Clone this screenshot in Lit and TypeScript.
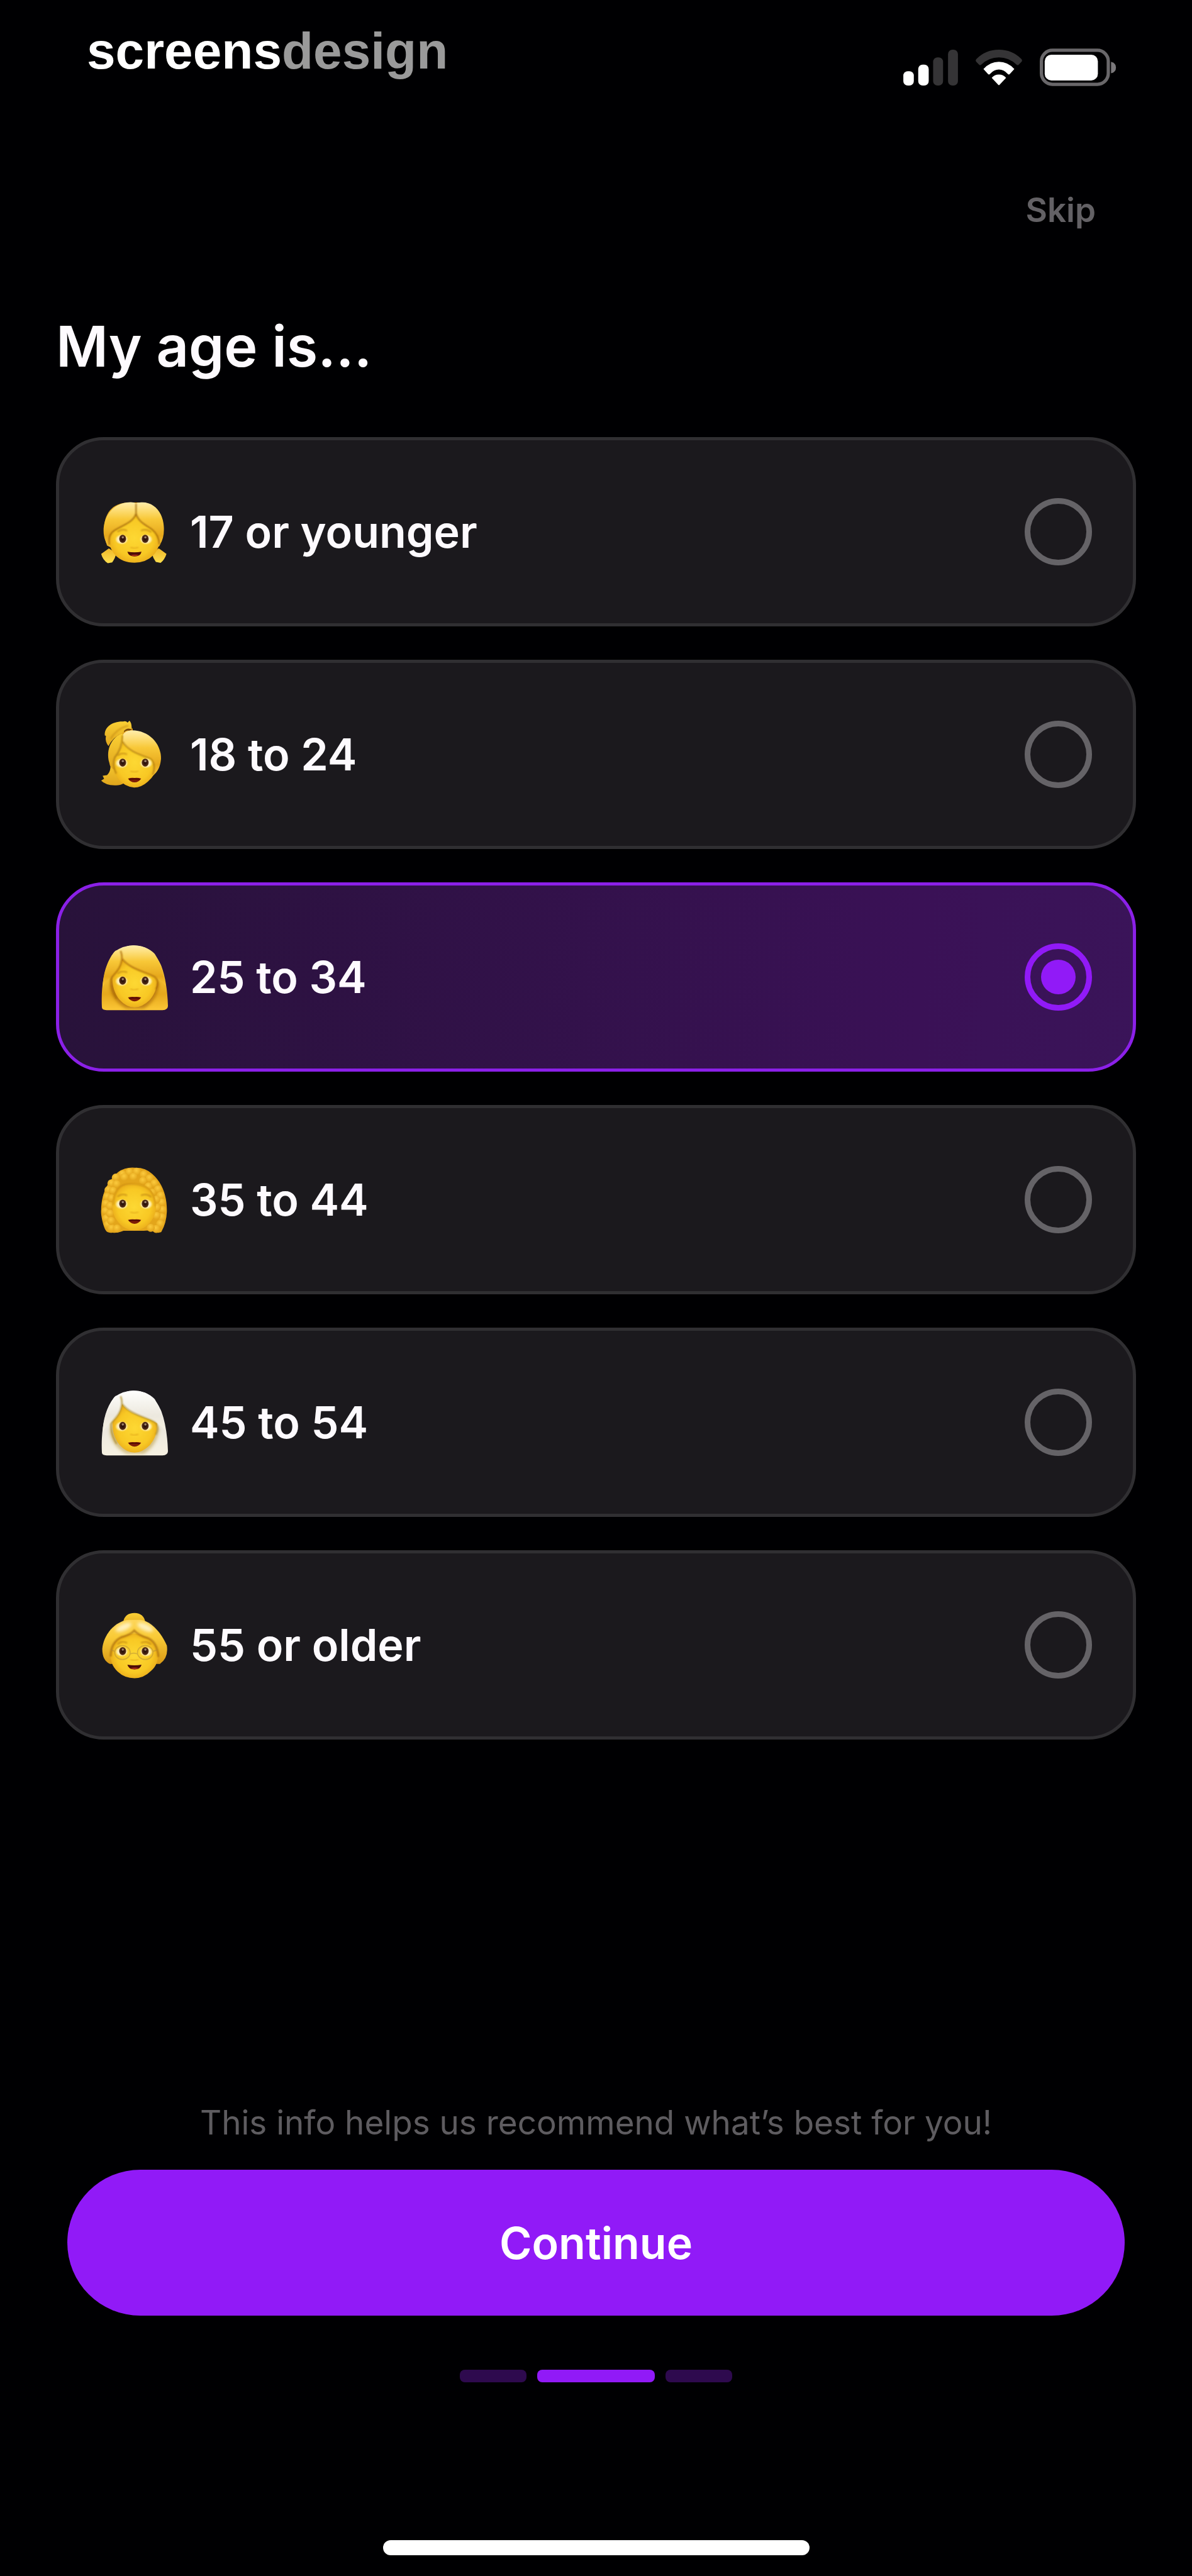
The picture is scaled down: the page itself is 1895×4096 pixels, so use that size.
import { LitElement, html, svg, css, type SVGTemplateResult } from "lit";
import { customElement, state } from "lit/decorators.js";

interface AgeOption {
  id: string;
  label: string;
  /** Vertical start of the portrait's view box. */
  top: number;
  art: SVGTemplateResult;
}

const eye = (x: number, y: number, side: number) => svg`
  <ellipse cx=${x + side * 5} cy=${y + 3} rx="38" ry="30" fill="url(#sclera)" />
  <ellipse cx=${x} cy=${y} rx="19" ry="22" fill="url(#iris)" />
  <circle cx=${x + 1} cy=${y - 8} r="6" fill="#b49a86" opacity=".85" />`;

const LEFT_BROW = 1;
const BOTH_BROWS = 2;

const features = (y: number, mouth: SVGTemplateResult, brows: number) => svg`
  ${brows >= LEFT_BROW
    ? svg`<path d="M160 ${y - 40}q20-16 46-6" fill="none" stroke="#b57a0c" stroke-width="9" stroke-linecap="round" opacity=".55" filter="url(#soft)" />`
    : svg``}
  ${brows >= BOTH_BROWS
    ? svg`<path d="M288 ${y - 46}q28-10 50 8" fill="none" stroke="#b57a0c" stroke-width="9" stroke-linecap="round" opacity=".55" filter="url(#soft)" />`
    : svg``}
  ${eye(185, y, -1)} ${eye(308, y, 1)}
  <path d="M230 ${y + 46}q18 10 38 0" fill="none" stroke="#d99a12" stroke-width="8" stroke-linecap="round" opacity=".5" filter="url(#soft)" />
  ${mouth}`;

const lips = (y: number) => svg`
  <path d="M214 ${y - 4}q20-6 36-3q16-3 36 3q-14 21-36 21t-36-21z" fill="#7d1c07" />
  <path d="M220 ${y}q30-4 60 0" fill="none" stroke="#4d0903" stroke-width="6" />`;

const smile = (y: number) => svg`
  <path d="M211 ${y}q38 7 77 0q-6 26-38 26t-39-26z" fill="#4c0b06" />
  <path d="M228 ${y + 20}q22-8 46-1q-24 11-46 1z" fill="#a32a17" />`;

const girl = svg`
  <path d="M110 340L68 370Q76 402 104 421L128 416Q146 392 150 366zM382 340L424 370Q414 402 392 419L366 414Q350 392 344 366z" fill="url(#pigtail)" />
  <path d="M100 325C60 215 90 90 220 90H280C405 90 432 220 385 328L330 350H150z" fill="#e9ae22" />
  <path d="M108 250Q180 150 256 150Q340 160 388 262Q394 332 352 378Q312 418 250 418Q184 418 144 376Q102 328 108 250z" fill="url(#face)" />
  <path d="M258 94Q238 84 208 90C100 104 62 220 90 296Q98 322 118 332Q104 280 128 254C160 226 240 206 258 152Q270 208 338 232Q380 256 382 328Q412 292 410 230C408 140 350 80 278 90Q264 90 258 94z" fill="url(#hair)" />
  <path d="M258 96V148C244 206 160 220 128 252Q106 276 112 322M258 148C270 200 318 214 346 238Q382 268 386 320" fill="none" stroke="#9b6207" stroke-width="8" opacity=".75" filter="url(#soft)" />
  ${features(288, smile(358), BOTH_BROWS)}`;

const ponytail = svg`
  <path d="M118 200Q140 130 240 104L240 160L130 240z" fill="#d99a1a" />
  <path d="M236 108C232 92 236 76 222 62L212 72Q202 60 188 66C130 64 84 96 88 142L94 144Q88 176 108 200Q132 150 190 126z" fill="url(#hairFlat)" />
  <path d="M120 160Q150 106 216 88" fill="none" stroke="#bd820c" stroke-width="8" opacity=".5" filter="url(#soft)" />
  <path d="M112 270Q130 330 100 358L76 362L84 378L68 388Q90 412 142 414Q170 416 190 404L170 300z" fill="url(#hairFlat)" />
  <path d="M130 250Q140 150 240 150Q350 190 372 300Q368 356 322 394Q286 426 248 426Q196 422 162 380Q124 326 130 250z" fill="url(#face)" />
  <path d="M186 130C126 150 92 216 112 290Q116 322 144 330Q126 290 150 256Q180 222 184 186z" fill="url(#hairFlat)" />
  <path d="M186 140Q198 114 236 114C330 114 398 190 394 272Q388 336 346 364Q366 300 340 268C290 250 214 232 186 176z" fill="url(#hair)" />
  <path d="M192 118Q210 96 238 110L220 116Q206 112 192 124z" fill="#75440a" />
  <path d="M184 142Q182 216 142 262Q126 300 150 350M186 176C216 232 292 250 338 270Q368 300 350 356" fill="none" stroke="#9b6a08" stroke-width="8" opacity=".6" filter="url(#soft)" />
  ${features(290, lips(381), LEFT_BROW)}`;

const straightHair = (hair: string, shade: string, depth: number) => svg`
  <path d="M72 404C66 290 84 176 138 104Q180 66 246 66C322 66 366 108 396 178Q428 264 432 396Q432 418 402 419H98Q72 418 72 404z" fill="url(#${hair})" />
  <path d="M116 290Q124 366 206 410H300Q372 366 384 276L350 220H130z" fill=${shade} opacity=${depth} filter="url(#blurry)" />
  <path d="M130 238Q160 190 182 140Q260 190 372 234Q380 310 332 364Q290 404 250 404Q206 404 168 362Q126 310 130 238z" fill="url(#face)" />
  <path d="M176 92C150 84 138 104 138 104C96 156 78 230 76 292Q96 256 124 236Q170 206 182 138C220 200 310 206 362 238Q390 248 418 286Q404 180 360 112Q314 66 240 66Q200 66 176 92z" fill="url(#${hair})" />
  <path d="M174 96Q184 120 180 146C170 206 136 220 122 248Q118 300 152 356M182 138C226 196 304 208 360 238Q388 262 366 306" fill="none" stroke=${shade} stroke-width="9" opacity=".75" filter="url(#soft)" />`;

const woman = svg`${straightHair("hair", "#ad6d07", 0.75)}${features(258, lips(354), LEFT_BROW)}`;

const whiteHaired = svg`
  <g transform="translate(0 -8)">${straightHair("silver", "#b08f2c", 0.5)}</g>
  ${features(250, lips(346), 0)}`;

const CURLS: Array<[number, number]> = [
  [184, 96], [222, 84], [262, 82], [300, 98], [332, 118], [358, 146], [378, 178], [392, 212],
  [398, 250], [402, 290], [398, 330], [390, 366], [368, 394], [148, 114], [124, 146], [108, 182],
  [100, 218], [94, 256], [92, 296], [96, 336], [104, 370], [124, 390], [154, 392], [338, 388],
  [194, 112], [244, 110], [296, 132], [326, 162], [346, 196], [368, 234], [372, 278], [370, 322],
  [152, 150], [132, 186], [124, 226], [116, 268], [116, 310], [122, 350],
];

const curly = svg`
  <path d="M92 400C82 386 64 320 68 290C70 190 110 130 160 84Q200 56 250 60Q310 58 346 94C404 144 428 220 426 300Q424 360 396 410Q380 420 358 410Q340 398 300 404H190Q160 418 130 414Q100 418 92 400z" fill="#e3a51b" />
  ${CURLS.map(([x, y]) => svg`<circle cx=${x} cy=${y} r="22" fill="url(#curl)" />`)}
  <path d="M130 240Q140 150 250 146Q352 152 364 244Q376 310 334 360Q294 402 250 402Q202 402 164 360Q120 310 130 240z" fill="url(#face)" />
  <path d="M134 262Q140 158 210 150Q300 142 340 190Q364 226 362 270" fill="none" stroke="#c5860c" stroke-width="8" opacity=".55" filter="url(#soft)" />
  ${features(256, lips(349), BOTH_BROWS)}`;

const grandmother = svg`
  <path d="M188 116Q196 66 250 66Q300 68 308 114L250 150z" fill="url(#hairFlat)" />
  <path d="M74 262C80 188 140 110 220 104H280C340 108 400 180 426 244Q436 310 388 344H116Q74 326 74 262z" fill="url(#hairDeep)" />
  <path d="M122 280Q132 190 248 178Q366 196 374 280Q386 342 340 382Q300 422 250 422Q196 422 158 386Q112 344 122 280z" fill="url(#face)" />
  <path d="M120 304Q120 226 178 198Q230 184 248 162Q274 190 320 202Q374 224 380 306" fill="none" stroke="#a66b08" stroke-width="11" opacity=".7" filter="url(#soft)" />
  <ellipse cx="190" cy="144" rx="46" ry="18" fill="#fff6cf" opacity=".85" transform="rotate(-24 190 144)" filter="url(#blurry)" />
  <ellipse cx="308" cy="144" rx="46" ry="18" fill="#fff6cf" opacity=".85" transform="rotate(24 308 144)" filter="url(#blurry)" />
  ${features(274, smile(348), BOTH_BROWS)}
  <g fill="none" stroke="#b08a3a" stroke-width="6" opacity=".5">
    <ellipse cx="184" cy="282" rx="42" ry="38" /><ellipse cx="308" cy="282" rx="42" ry="38" />
    <path d="M226 290q20-10 40 0M142 276l-18-8M350 276l22-8" />
  </g>`;

const OPTIONS: AgeOption[] = [
  { id: "under-18", label: "17 or younger", top: 11, art: girl },
  { id: "18-24", label: "18 to 24", top: 7, art: ponytail },
  { id: "25-34", label: "25 to 34", top: 0, art: woman },
  { id: "35-44", label: "35 to 44", top: -4, art: curly },
  { id: "45-54", label: "45 to 54", top: -8, art: whiteHaired },
  { id: "55-plus", label: "55 or older", top: 2, art: grandmother },
];

@customElement("app-root")
export class AppRoot extends LitElement {
  @state() private selected = "25-34";

  static styles = css`
    :host {
      display: block;
      background: #000002;
      color: #fdfafe;
      font-family: Inter, "Liberation Sans", sans-serif;
    }
    .screen {
      box-sizing: border-box;
      min-height: 100vh;
      display: flex;
      flex-direction: column;
      padding: 35px 89px 33px;
    }
    .status {
      display: flex;
      justify-content: space-between;
      align-items: flex-start;
      padding: 0 31px 0 49px;
    }
    .brand {
      font-family: "Liberation Sans", Arial, sans-serif;
      font-size: 82px;
      line-height: 92px;
      font-weight: 700;
      color: #fff;
    }
    .brand-dim { color: #9a9a9a; }
    .indicators {
      display: flex;
      align-items: center;
      gap: 28px;
      padding-top: 42px;
    }
    .indicators svg { display: block; }
    .topbar {
      display: flex;
      justify-content: flex-end;
      margin-top: 165px;
      padding-right: 64px;
    }
    button {
      appearance: none;
      border: 0;
      margin: 0;
      padding: 0;
      font-family: inherit;
      cursor: pointer;
    }
    .skip {
      background: none;
      color: #636165;
      font-size: 53px;
      line-height: 64px;
      font-weight: 600;
    }
    h1 {
      margin: 127px 0 86px;
      font-size: 90px;
      line-height: 116px;
      font-weight: 600;
    }
    .options {
      border: 0;
      margin: 0;
      padding: 0;
      min-width: 0;
      display: flex;
      flex-direction: column;
      gap: 53px;
    }
    .option {
      box-sizing: border-box;
      min-height: 301px;
      display: flex;
      align-items: center;
      border: 5px solid #302f32;
      border-radius: 76px;
      background: #1b191d;
      padding: 0 65px 0 47px;
      cursor: pointer;
    }
    .option.chosen {
      border-color: #8b20e8;
      background: linear-gradient(90deg, #28123a, #3a1156 80%, #3a1459);
    }
    .portrait {
      flex: none;
      width: 140px;
      height: 140px;
    }
    .label {
      flex: 1;
      margin-left: 21px;
      font-size: 70px;
      line-height: 84px;
      font-weight: 600;
    }
    .radio {
      appearance: none;
      box-sizing: border-box;
      flex: none;
      display: grid;
      place-items: center;
      width: 107px;
      height: 107px;
      margin: 0;
      border: 9px solid #656367;
      border-radius: 50%;
      cursor: pointer;
    }
    .radio:checked { border-color: #911af7; }
    .radio:checked::before {
      content: "";
      width: 55px;
      height: 55px;
      border-radius: 50%;
      background: #911af7;
    }
    .footer {
      margin-top: auto;
      display: flex;
      flex-direction: column;
      align-items: center;
    }
    .note {
      margin: 0;
      color: #5e5c60;
      font-size: 53px;
      line-height: 64px;
    }
    .action {
      display: flex;
      align-self: stretch;
      padding: 0 18px;
      margin: 43px 0 86px;
    }
    .continue {
      flex: 1;
      height: 232px;
      border-radius: 116px;
      background: #911af7;
      color: #fff;
      font-size: 70px;
      font-weight: 600;
    }
    .steps {
      display: flex;
      gap: 17px;
    }
    .step {
      width: 106px;
      height: 20px;
      border-radius: 8px;
      background: #2e0a4e;
    }
    .step.current {
      width: 187px;
      background: #911af7;
    }
    .home {
      width: 678px;
      max-width: 100%;
      height: 24px;
      margin-top: 251px;
      border-radius: 12px;
      background: #fff;
    }
    .paints {
      position: absolute;
      width: 0;
      height: 0;
    }
  `;

  private paints() {
    return html`<svg class="paints" aria-hidden="true">
      <defs>
        <linearGradient id="hair" x1="0" y1="0" x2="0" y2="1">
          <stop offset="0" stop-color="#ffedac" />
          <stop offset=".16" stop-color="#fddf7b" />
          <stop offset=".38" stop-color="#f8c838" />
          <stop offset=".75" stop-color="#e6a81c" />
          <stop offset="1" stop-color="#fcc736" />
        </linearGradient>
        <linearGradient id="hairDeep" x1="0" y1="0" x2="0" y2="1">
          <stop offset="0" stop-color="#fdd65a" />
          <stop offset=".4" stop-color="#f9ca36" />
          <stop offset="1" stop-color="#d99a16" />
        </linearGradient>
        <linearGradient id="hairFlat" x1="0" y1="0" x2="0" y2="1">
          <stop offset="0" stop-color="#fbd035" />
          <stop offset="1" stop-color="#dfa51c" />
        </linearGradient>
        <linearGradient id="pigtail" x1="0" y1="0" x2="0" y2="1">
          <stop offset="0" stop-color="#eeb72a" />
          <stop offset="1" stop-color="#ffe04e" />
        </linearGradient>
        <linearGradient id="silver" x1="0" y1="0" x2="0" y2="1">
          <stop offset="0" stop-color="#fffffd" />
          <stop offset=".6" stop-color="#ece8de" />
          <stop offset="1" stop-color="#f7f2e2" />
        </linearGradient>
        <radialGradient id="face" cx=".5" cy=".5" r=".58">
          <stop offset="0" stop-color="#fdd833" />
          <stop offset=".65" stop-color="#f8c824" />
          <stop offset="1" stop-color="#e5a218" />
        </radialGradient>
        <radialGradient id="curl" cx=".45" cy=".35" r=".6">
          <stop offset="0" stop-color="#fccb3e" />
          <stop offset="1" stop-color="#e3a51b" />
        </radialGradient>
        <radialGradient id="sclera">
          <stop offset=".4" stop-color="#fff6d8" />
          <stop offset=".7" stop-color="#ffeeb0" stop-opacity=".8" />
          <stop offset="1" stop-color="#ffdc60" stop-opacity="0" />
        </radialGradient>
        <radialGradient id="iris">
          <stop offset=".3" stop-color="#2c120b" />
          <stop offset="1" stop-color="#5d3419" />
        </radialGradient>
        <filter id="soft" x="-20%" y="-50%" width="140%" height="200%"><feGaussianBlur stdDeviation="3" /></filter>
        <filter id="blurry" x="-30%" y="-60%" width="160%" height="220%"><feGaussianBlur stdDeviation="9" /></filter>
      </defs>
    </svg>`;
  }

  private indicators() {
    return html`<div class="indicators">
      <svg width="87" height="57" viewBox="0 0 99 65" role="img" aria-label="Signal">
        <g fill="#fff"><rect y="39" width="19" height="26" rx="8" /><rect x="27" y="27" width="19" height="38" rx="8" /></g>
        <g fill="#353436"><rect x="54" y="14" width="18" height="51" rx="8" /><rect x="81" width="18" height="65" rx="8" /></g>
      </svg>
      <svg width="74" height="57" viewBox="0 0 84 65" role="img" aria-label="Wi-Fi">
        <path d="M1 17Q18 0 42 0T83 17Q85 20 83 22L78 27Q76 29 74 27Q60 14 42 14T10 27Q8 29 6 27L1 22Q-1 20 1 17z" fill="#353436" />
        <path d="M14 35Q26 22 42 22T70 35L62 44Q60 46 58 44Q51 36 42 36T26 44Q24 46 22 44z" fill="#fff" />
        <path d="M29 51Q34 45 42 45T55 51L43 64Q42 65 41 64z" fill="#fff" />
      </svg>
      <svg width="122" height="60" viewBox="0 0 140 68" role="img" aria-label="Battery">
        <rect x="3" y="3" width="122" height="62" rx="20" fill="none" stroke="#69676a" stroke-width="6" />
        <rect x="9" y="11" width="97" height="47" rx="12" fill="#fff" />
        <path d="M130 24Q139 26 139 34.500T130 45z" fill="#7b797c" />
      </svg>
    </div>`;
  }

  render() {
    return html`
      ${this.paints()}
      <div class="screen">
        <header class="status">
          <div class="brand">screens<span class="brand-dim">design</span></div>
          ${this.indicators()}
        </header>
        <div class="topbar"><button class="skip" type="button">Skip</button></div>
        <h1 id="question">My age is...</h1>
        <fieldset class="options" aria-labelledby="question">
          ${OPTIONS.map(
            (o) => html`<label class="option ${o.id === this.selected ? "chosen" : ""}" for=${o.id}>
              <svg class="portrait" viewBox="0 ${o.top} 480 480" aria-hidden="true">${o.art}</svg>
              <span class="label">${o.label}</span>
              <input
                class="radio"
                type="radio"
                name="age"
                id=${o.id}
                .checked=${o.id === this.selected}
                @change=${() => (this.selected = o.id)}
              />
            </label>`,
          )}
        </fieldset>
        <footer class="footer">
          <p class="note">This info helps us recommend what’s best for you!</p>
          <div class="action"><button class="continue" type="button">Continue</button></div>
          <div class="steps">
            <span class="step"></span><span class="step current"></span><span class="step"></span>
          </div>
          <div class="home"></div>
        </footer>
      </div>
    `;
  }
}
